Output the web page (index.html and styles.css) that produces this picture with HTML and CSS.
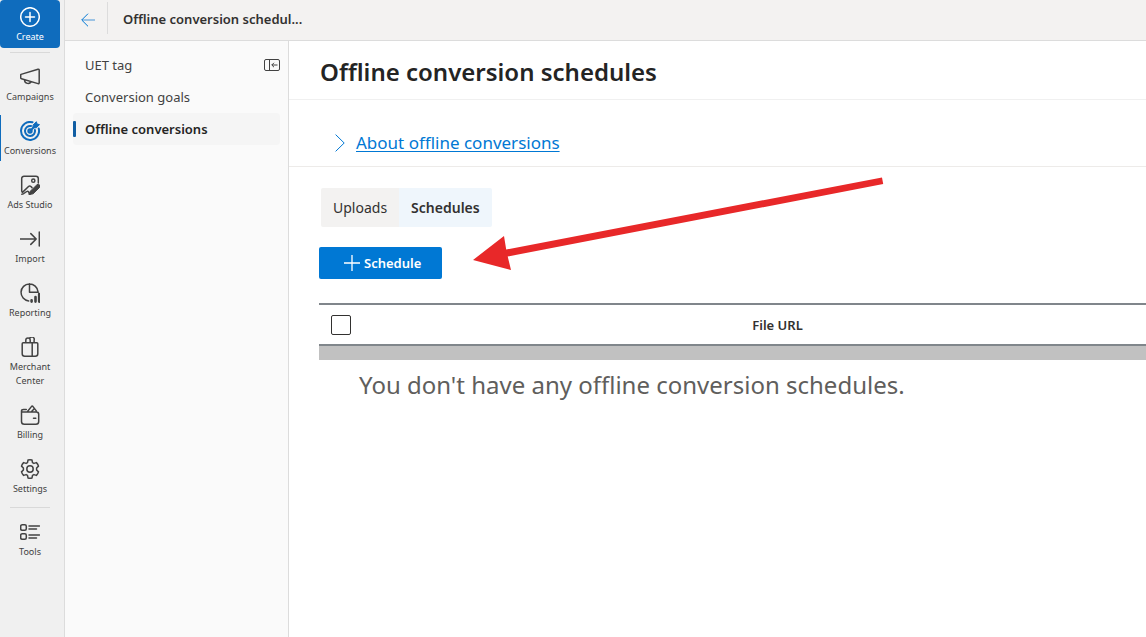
FILE: index.html
```html
<!DOCTYPE html>
<html lang="en">
<head>
<meta charset="utf-8">
<meta name="viewport" content="width=device-width, initial-scale=1">
<title>Offline conversion schedules</title>
<link rel="stylesheet" href="styles.css">
</head>
<body>
<div class="app">
  <nav class="rail" aria-label="Primary">
    <button class="create" type="button">
      <svg class="icon" viewBox="0 0 20 20"><circle cx="10" cy="10" r="9.3"/><path d="M10 5.5v9M5.5 10h9"/></svg>
      <span>Create</span>
    </button>
    <hr class="rail-line">
    <a class="rail-item" href="#">
      <svg class="icon" viewBox="0 0 20 20"><path d="M1 7.4 18 2.3q1.2-.3 1.2.9v12.6q0 1.1-1.2.8L1.5 11.8q-.8-.2-.8-1V8q0-.5.3-.6zM4.6 12.8c-.4 4 5.400 5 6.200 1.700"/></svg>
      <span>Campaigns</span>
    </a>
    <a class="rail-item rail-item-active" href="#">
      <svg class="icon icon-target" viewBox="0 0 20 20"><path d="M12.500 1.300a9 9 0 1 0 6.200 6.200M11 5.100a5 5 0 1 0 3.900 3.900"/><circle cx="10" cy="10" r="1.700"/><path d="m10 10 5-5"/><path class="solid" d="M13.300 3.800 16.400.7l.6 2.300 2.500.6-3.200 3.200h-3z"/></svg>
      <span>Conversions</span>
    </a>
    <a class="rail-item" href="#">
      <svg class="icon" viewBox="0 0 20 20"><path d="M18.300 8V3.500a2.300 2.300 0 0 0-2.300-2.300H4a2.300 2.300 0 0 0-2.300 2.300v12q0 1.200.8 1.900l6-5.900q1.200-1.100 2.400 0l1.100 1.100"/><circle cx="13.300" cy="5.700" r="1.600"/><path d="M1.800 19.200c2.500 0 4-2.900 5.800-3s.7 3 2.600 2.900"/><path class="solid" d="m10.300 16.200 6.700-6.500q1.300-1 2.500.2t.2 2.400l-6.600 6.500-3.800.7z"/></svg>
      <span>Ads Studio</span>
    </a>
    <a class="rail-item" href="#">
      <svg class="icon" viewBox="0 0 20 20"><path d="M.3 10h15.900M10.800 4.600l5.400 5.400-5.400 5.400M19.300 3v14"/></svg>
      <span>Import</span>
    </a>
    <a class="rail-item" href="#">
      <svg class="icon" viewBox="0 0 20 20"><path d="M8.700 17.900A8.500 8.500 0 1 1 18 8.700M9.500.8v8.500h8.800"/><path class="bar" d="M11.600 17.300v1.300M15.500 14v4.600M19.200 11v7.600"/></svg>
      <span>Reporting</span>
    </a>
    <a class="rail-item" href="#">
      <svg class="icon" viewBox="0 0 20 20"><path d="M3.200 5.700h13.600q1 0 1 1v10q0 2.500-2.500 2.500H4.700q-2.500 0-2.500-2.500v-10q0-1 1-1zM12.200 5.700v13.500M5.800 5.700V3.200a2.200 2.200 0 0 1 4.400 0v2.500M9.700 1.500a2.200 2.200 0 0 1 4.400 1.700v2.500"/></svg>
      <span>Merchant Center</span>
    </a>
    <a class="rail-item" href="#">
      <svg class="icon" viewBox="0 0 20 20"><path d="M1.500 6v10.400a2.800 2.800 0 0 0 2.800 2.800h11.600a2.800 2.800 0 0 0 2.800-2.800V9.300a2.300 2.300 0 0 0-2.300-2.300H3.300Q1.500 7 1.500 6q0-1.400 2-1.400h2.800M13.500 13.300h2.300M7.500 6.500l4.100-5.100q.6-.6 1.200 0l3.500 4.500M11.800 6.300 14 4"/></svg>
      <span>Billing</span>
    </a>
    <a class="rail-item" href="#">
      <svg class="icon" viewBox="0 0 20 20"><path d="M8 1.100q2-.5 4 0l.5 2.500 1.400.8 2.500-.8q1.500 1.500 2.100 3.500l-1.900 1.900v2l1.900 1.900q-.6 2-2.100 3.500l-2.500-.8-1.400.8-.5 2.500q-2 .5-4 0l-.5-2.500-1.400-.8-2.500.8q-1.500-1.500-2.100-3.500L3.400 11V9L1.500 7.100q.6-2 2.100-3.500l2.500.8 1.400-.8z"/><circle cx="10" cy="10" r="3.200"/></svg>
      <span>Settings</span>
    </a>
    <hr class="rail-line">
    <a class="rail-item" href="#">
      <svg class="icon" viewBox="0 0 20 20"><rect x=".7" y="2.700" width="5.600" height="5.600" rx="1.500"/><rect x=".7" y="11.700" width="5.600" height="5.600" rx="1.500"/><path d="M9 4h10.500M9 7h7.500M9 13h10.500M9 16h7.500"/></svg>
      <span>Tools</span>
    </a>
  </nav>

  <div class="workspace">
    <header class="topbar">
      <button class="back" type="button" aria-label="Back">
        <svg viewBox="0 0 14 14"><path class="shaft" d="M1 7h13"/><path d="M7 .7.700 7 7 13.300"/></svg>
      </button>
      <span class="topbar-title">Offline conversion schedul...</span>
    </header>

    <div class="columns">
      <nav class="sidenav" aria-label="Conversion tracking">
        <div class="sidenav-row">
          <a href="#">UET tag</a>
          <button class="collapse" type="button" aria-label="Collapse menu">
            <svg viewBox="0 0 16 12"><rect x=".5" y=".5" width="15" height="11" rx="1.500"/><path d="M5.500.5v11M7.800 6h5.700M10 3.800 7.800 6 10 8.200"/></svg>
          </button>
        </div>
        <div class="sidenav-row"><a href="#">Conversion goals</a></div>
        <div class="sidenav-row sidenav-row-active"><a href="#" aria-current="page">Offline conversions</a></div>
      </nav>

      <main class="main">
        <h1>Offline conversion schedules</h1>
        <div class="about">
          <svg viewBox="0 0 10 18"><path d="M.6.6 9.200 9 .6 17.400"/></svg>
          <a href="#">About offline conversions</a>
        </div>
        <div class="content">
          <div class="tabs" role="tablist">
            <button type="button" role="tab" aria-selected="false">Uploads</button>
            <button type="button" role="tab" aria-selected="true">Schedules</button>
          </div>
          <button class="primary" type="button">
            <svg viewBox="0 0 16 16"><path d="M8 0v16M0 8h16"/></svg>
            <span>Schedule</span>
          </button>
          <table class="grid">
            <thead>
              <tr>
                <th class="check"><input type="checkbox" aria-label="Select all"></th>
                <th class="url">File URL</th>
              </tr>
            </thead>
            <tbody>
              <tr class="band"><td colspan="2"></td></tr>
            </tbody>
          </table>
          <p class="empty">You don't have any offline conversion schedules.</p>
        </div>
        <svg class="pointer" viewBox="0 0 412 94" aria-hidden="true"><path d="M0 83 31 59 33.200 72.500 409 .5 410.200 7 34.700 79.500 38 93z"/></svg>
      </main>
    </div>
  </div>
</div>
</body>
</html>
```
FILE: styles.css
```css
* {
  box-sizing: border-box;
}

body {
  margin: 0;
  font-family: "Noto Sans", "Open Sans", sans-serif;
  font-size: 13px;
  color: #323130;
  background: #fff;
}

button {
  font: inherit;
  border: 0;
  padding: 0;
  background: none;
  color: inherit;
  cursor: pointer;
}

a {
  color: inherit;
  text-decoration: none;
}

svg {
  display: block;
  flex: none;
  fill: none;
  stroke: currentColor;
}

.app {
  display: flex;
  min-height: 100vh;
}

.rail {
  flex: none;
  width: 65px;
  padding-right: 4px;
  border-right: 1px solid #dcdcdc;
  background: #f0f0f0;
  font-size: 9px;
  line-height: 14px;
  color: #424242;
}

.icon {
  width: 20px;
  height: 20px;
  stroke-width: 1.5;
  stroke-linejoin: round;
  stroke-linecap: round;
}

.icon .solid {
  fill: currentColor;
  stroke-width: 1;
}

.icon .bar {
  stroke-width: 2.6;
}

.icon-target {
  stroke-width: 2;
}

.create,
.rail-item {
  display: flex;
  flex-direction: column;
  align-items: center;
  gap: 3px;
  width: 100%;
  text-align: center;
}

.create {
  height: 48px;
  padding-top: 7px;
  border-radius: 4px;
  background: #0f6cbd;
  color: #fff;
}

.rail-line {
  height: 1px;
  margin: 4px 10px;
  border: 0;
  background: #d9d9d9;
}

.rail-item {
  padding: 10px 0 7px;
}

.rail-item-active {
  position: relative;
}

.rail-item-active .icon {
  color: #0f6cbd;
}

.rail-item-active::before {
  content: "";
  position: absolute;
  left: 0;
  top: 4px;
  bottom: 4px;
  width: 1px;
  background: #0f6cbd;
}

.workspace {
  flex: 1;
  min-width: 0;
  display: flex;
  flex-direction: column;
}

.topbar {
  display: flex;
  height: 41px;
  border-bottom: 1px solid #dcdcdc;
  background: #f3f2f1;
}

.back {
  height: 32px;
  margin-top: 2px;
  padding: 4px 12px 0 16px;
  border-right: 1px solid #dcdcdc;
  color: #0078d4;
}

.back svg {
  width: 14px;
  height: 14px;
}

.back .shaft {
  stroke: #9cc3e4;
  stroke-width: 2;
}

.topbar-title {
  padding-left: 15px;
  line-height: 39px;
  font-weight: 600;
}

.columns {
  flex: 1;
  display: flex;
}

.sidenav {
  flex: none;
  width: 224px;
  padding: 8px;
  border-right: 1px solid #dcdcdc;
  background: #fafafa;
  color: #424242;
  line-height: 32px;
}

.sidenav-row {
  display: flex;
  justify-content: space-between;
  padding-left: 12px;
  border-radius: 4px;
}

.sidenav-row-active {
  position: relative;
  background: #f5f5f5;
  color: #242424;
  font-weight: 600;
}

.sidenav-row-active::before {
  content: "";
  position: absolute;
  left: 0;
  top: 8px;
  bottom: 8px;
  width: 3px;
  border-radius: 1px;
  background: #115ea3;
}

.collapse svg {
  width: 16px;
  height: 12px;
}

.main {
  position: relative;
  flex: 1;
  min-width: 0;
}

h1 {
  margin: 0;
  padding: 15px 31px 11px;
  border-bottom: 1px solid #f0f0f0;
  font-size: 24px;
  line-height: 32px;
  font-weight: 600;
  color: #242424;
}

.about {
  display: flex;
  align-items: center;
  gap: 11px;
  padding: 31px 46px 11px;
  border-bottom: 1px solid #edebe9;
  font-size: 17px;
  line-height: 24px;
  color: #0078d4;
}

.about svg {
  width: 10px;
  height: 18px;
}

.about a {
  text-decoration: underline;
  text-decoration-thickness: 1px;
  text-underline-offset: 2px;
}

.content {
  padding: 21px 0 0 30px;
}

.tabs {
  display: flex;
  margin-left: 2px;
  font-size: 14px;
}

.tabs button {
  padding: 0 12px;
  line-height: 39px;
  background: #f3f2f1;
  border-radius: 2px 0 0 2px;
}

.tabs button[aria-selected="true"] {
  background: #eff6fc;
  border-radius: 0 2px 2px 0;
  font-weight: 600;
}

.primary {
  display: flex;
  align-items: center;
  gap: 4px;
  height: 32px;
  margin: 20px 0 24px;
  padding: 0 21px 0 25px;
  border-radius: 2px;
  background: #0078d4;
  color: #fff;
  font-weight: 600;
}

.primary svg {
  width: 16px;
  height: 16px;
  stroke-width: 1.3;
}

.grid {
  width: 100%;
  border-collapse: collapse;
  border-top: 2px solid #80868b;
}

.grid th {
  height: 41px;
  padding: 0;
  border-bottom: 2px solid #80868b;
  font-size: 13px;
  font-weight: 600;
}

.grid .check {
  width: 44px;
  padding-left: 12px;
  text-align: left;
}

.grid .url {
  padding-left: 46px;
}

.check input {
  appearance: none;
  display: block;
  width: 20px;
  height: 20px;
  margin: 0;
  border: 1px solid #323130;
  border-radius: 2px;
  background: #fff;
}

.band td {
  height: 15px;
  padding: 0;
  background: #c1c1c1;
}

.empty {
  margin: 8px 40px;
  font-size: 24px;
  line-height: 34px;
  color: #605e5c;
}

.pointer {
  position: absolute;
  left: 184px;
  top: 136px;
  width: 412px;
  height: 94px;
  stroke: none;
  fill: #e82829;
  pointer-events: none;
}
```
